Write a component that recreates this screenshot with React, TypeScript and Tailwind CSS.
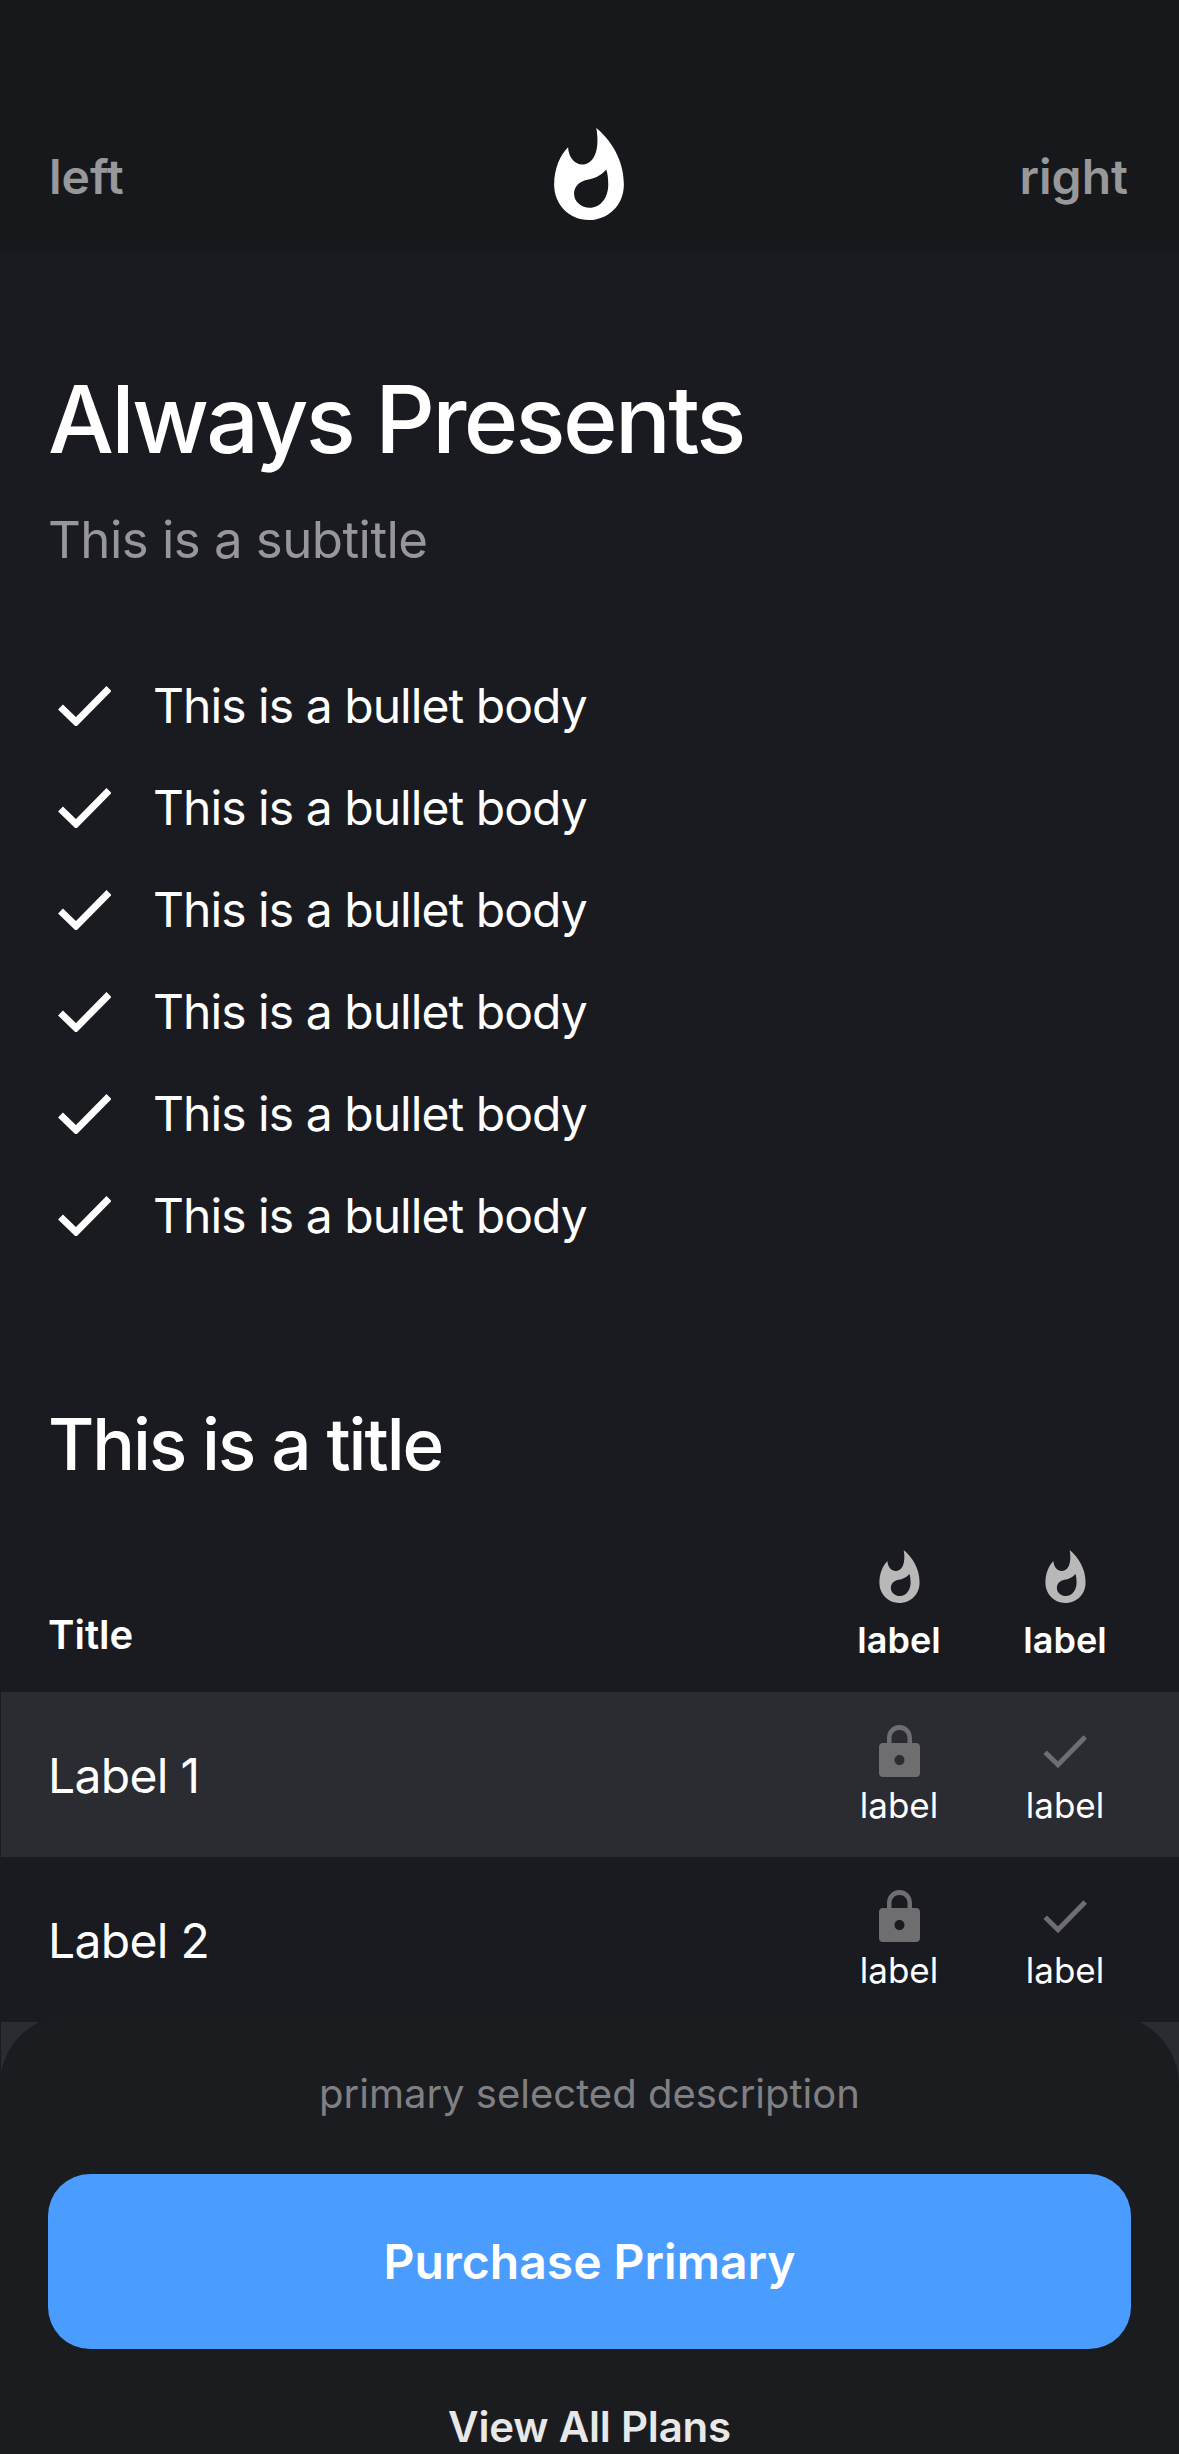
const FlameIcon = ({ className }: { className?: string }) => (
  <svg viewBox="105 55 210 277" className={className} fill="currentColor">
    <path
      fillRule="evenodd"
      d="M232 55C275 90 315 150 315 225C315 290 265 332 210 332C150 332 105 285 105 225C105 175 125 135 147 113C148 140 165 165 190 165C220 165 245 130 232 55ZM262 180C245 200 225 207 205 211C180 216 165 232 165 253C165 278 188 295 212 295C245 295 268 265 268 225C268 208 266 192 262 180Z"
    />
  </svg>
);

const LockIcon = ({ className }: { className?: string }) => (
  <svg viewBox="0 0 41 52" className={className} fill="currentColor">
    <path
      fillRule="evenodd"
      d="M8 18V13C8 6 13 0 20.500 0C28 0 33 6 33 13V18H37C39.500 18 41 19.500 41 22V48C41 50.500 39.500 52 37 52H4C1.500 52 0 50.500 0 48V22C0 19.500 1.500 18 4 18ZM12.500 18H28.500V13C28.500 8.500 25 5 20.500 5C16 5 12.500 8.500 12.500 13ZM20.500 30C18 30 15.500 32 15.500 35C15.500 38 18 40 20.500 40C23 40 25.500 38 25.500 35C25.500 32 23 30 20.500 30Z"
    />
  </svg>
);

const TickIcon = ({ className, width }: { className?: string; width: number }) => (
  <svg viewBox="0 0 53 40" className={className} fill="none" stroke="currentColor" strokeWidth={width}>
    <path d="M2.500 21L18 36L51 2.500" />
  </svg>
);

const bullets = [1, 2, 3, 4, 5, 6];

const rows = [
  { label: "Label 1", bg: "bg-[#2a2c32]", cells: true },
  { label: "Label 2", bg: "", cells: true },
  { label: "", bg: "bg-[#2a2c32]", cells: false }, // only peeks out at the sheet's corners
];

export default function App() {
  return (
    <div className="relative w-[1179px] h-[2454px] overflow-hidden bg-[#1a1b20] text-white font-['Inter',sans-serif]">
      <header className="h-[252px] bg-[#16181c] grid grid-cols-3 items-start px-[50px] pt-[128px]">
        <span className="text-[48px] leading-[100px] -mt-[1px] -ml-[1px] font-semibold text-[#98989a]">left</span>
        <FlameIcon className="w-[70px] h-[92px] justify-self-center text-white" />
        <span className="text-[48px] leading-[100px] -mt-[1px] mr-[1px] font-semibold text-[#98989a] justify-self-end">right</span>
      </header>

      <section className="px-[48px] pt-[111px]">
        <h1 className="text-[93px] leading-[112px] font-medium tracking-[-2.7px]">Always Presents</h1>
        <p className="mt-[34px] text-[51px] leading-[62px] tracking-[-0.55px] text-[#97979b]">This is a subtitle</p>
        <ul className="mt-[106px] flex flex-col gap-[44px]">
          {bullets.map((b) => (
            <li key={b} className="flex items-center h-[58px]">
              <TickIcon className="ml-[10px] w-[53px] h-[40px]" width={7} />
              <span className="ml-[42px] text-[48px] leading-[58px] tracking-[-0.95px]">This is a bullet body</span>
            </li>
          ))}
        </ul>
        <h2 className="mt-[156px] text-[71px] leading-[86px] font-medium tracking-[-2px]">This is a title</h2>
      </section>

      <div className="mt-[63px] flex items-end pl-[48px] pr-[31px] pb-[30px]">
        <span className="flex-1 pb-[3px] text-[40px] leading-[48px] font-semibold">Title</span>
        {["a", "b"].map((k) => (
          <div key={k} className="w-[166px] flex flex-col items-center">
            <FlameIcon className="w-[41px] h-[53px] text-[#b8b8b8]" />
            <span className="mt-[15px] text-[36px] leading-[44px] font-semibold">label</span>
          </div>
        ))}
      </div>

      {rows.map((r, i) => (
        <div key={i} className={`h-[165px] ml-px flex pl-[47px] pr-[31px] ${r.bg}`}>
          <span className="flex-1 self-center mt-[2px] text-[48px] leading-[58px] tracking-[-0.7px]">{r.label}</span>
          {r.cells && (
            <>
              <div className="w-[166px] pt-[33px] flex flex-col items-center">
                <LockIcon className="w-[41px] h-[52px] text-[#6e6e70]" />
                <span className="mt-[6px] text-[35px] leading-[44px]">label</span>
              </div>
              <div className="w-[166px] pt-[33px] flex flex-col items-center">
                <div className="h-[52px] flex items-center justify-center">
                  <TickIcon className="w-[44px] h-[33px] text-[#6e6e70]" width={6} />
                </div>
                <span className="mt-[6px] text-[35px] leading-[44px]">label</span>
              </div>
            </>
          )}
        </div>
      ))}

      <footer className="absolute left-0 right-0 bottom-0 h-[439px] rounded-t-[70px] bg-[#1b1c20] px-[48px] flex flex-col items-center">
        <p className="mt-[55px] text-[40px] leading-[48px] text-[#808084]">primary selected description</p>
        <button className="mt-[56px] w-full h-[175px] shrink-0 rounded-[42px] bg-[#4a9dff] text-[48px] font-semibold text-white">
          Purchase Primary
        </button>
        <span className="mt-[53px] text-[42px] leading-[50px] font-semibold tracking-[-0.2px] text-[#e8e8e8]">View All Plans</span>
      </footer>
    </div>
  );
}
